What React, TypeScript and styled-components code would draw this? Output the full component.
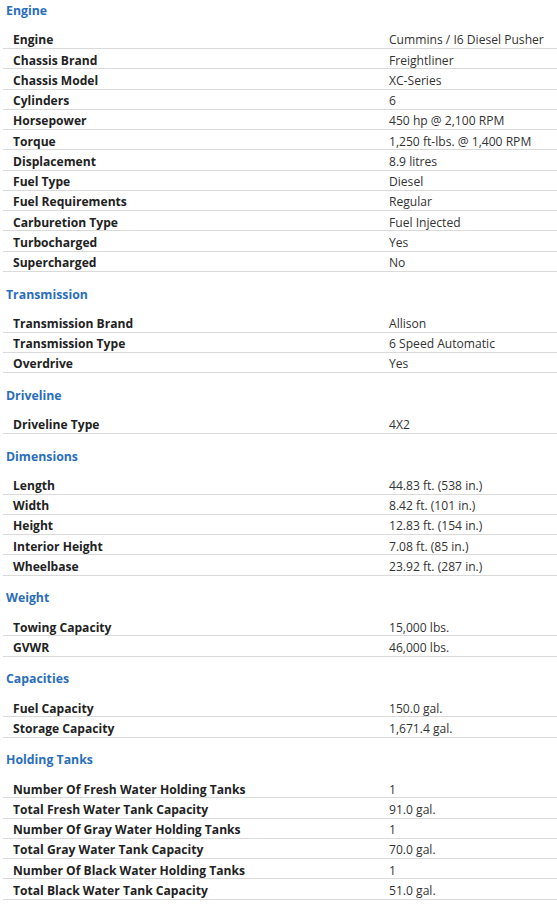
import styled, { createGlobalStyle } from 'styled-components'

const GlobalStyle = createGlobalStyle`
  html, body {
    margin: 0;
    padding: 0;
    background: #ffffff;
  }
  body {
    font-family: 'Open Sans', 'Noto Sans', Arial, sans-serif;
    color: #333333;
    -webkit-font-smoothing: antialiased;
  }
`

const Page = styled.div`
  width: 557px;
  padding: 0 0 0 3px;
  box-sizing: border-box;
`

const Section = styled.section`
  & + & {
    margin-top: 11.75px;
  }
`

const Heading = styled.h3`
  margin: 0;
  padding: 2px 0 0 3px;
  height: 26.75px;
  font-size: 12.3px;
  font-weight: 700;
  line-height: 18px;
  color: #2a6ebb;
`

const Row = styled.div`
  display: grid;
  grid-template-columns: 386px 1fr;
  height: 19.25px;
  border-bottom: 1px solid #dadada;
  font-size: 12.1px;
  line-height: 17px;
  white-space: nowrap;
`

const Label = styled.div`
  padding: 2.5px 0 0 10px;
  font-weight: 700;
  color: #222222;
`

const Value = styled.div`
  padding-top: 2.5px;
  color: #333333;
`

type Spec = [string, string]

const sections: { title: string; rows: Spec[] }[] = [
  {
    title: 'Engine',
    rows: [
      ['Engine', 'Cummins / I6 Diesel Pusher'],
      ['Chassis Brand', 'Freightliner'],
      ['Chassis Model', 'XC-Series'],
      ['Cylinders', '6'],
      ['Horsepower', '450 hp @ 2,100 RPM'],
      ['Torque', '1,250 ft-lbs. @ 1,400 RPM'],
      ['Displacement', '8.9 litres'],
      ['Fuel Type', 'Diesel'],
      ['Fuel Requirements', 'Regular'],
      ['Carburetion Type', 'Fuel Injected'],
      ['Turbocharged', 'Yes'],
      ['Supercharged', 'No'],
    ],
  },
  {
    title: 'Transmission',
    rows: [
      ['Transmission Brand', 'Allison'],
      ['Transmission Type', '6 Speed Automatic'],
      ['Overdrive', 'Yes'],
    ],
  },
  {
    title: 'Driveline',
    rows: [['Driveline Type', '4X2']],
  },
  {
    title: 'Dimensions',
    rows: [
      ['Length', '44.83 ft. (538 in.)'],
      ['Width', '8.42 ft. (101 in.)'],
      ['Height', '12.83 ft. (154 in.)'],
      ['Interior Height', '7.08 ft. (85 in.)'],
      ['Wheelbase', '23.92 ft. (287 in.)'],
    ],
  },
  {
    title: 'Weight',
    rows: [
      ['Towing Capacity', '15,000 lbs.'],
      ['GVWR', '46,000 lbs.'],
    ],
  },
  {
    title: 'Capacities',
    rows: [
      ['Fuel Capacity', '150.0 gal.'],
      ['Storage Capacity', '1,671.4 gal.'],
    ],
  },
  {
    title: 'Holding Tanks',
    rows: [
      ['Number Of Fresh Water Holding Tanks', '1'],
      ['Total Fresh Water Tank Capacity', '91.0 gal.'],
      ['Number Of Gray Water Holding Tanks', '1'],
      ['Total Gray Water Tank Capacity', '70.0 gal.'],
      ['Number Of Black Water Holding Tanks', '1'],
      ['Total Black Water Tank Capacity', '51.0 gal.'],
    ],
  },
]

export default function App() {
  return (
    <>
      <GlobalStyle />
      <Page>
        {sections.map((s) => (
          <Section key={s.title}>
            <Heading>{s.title}</Heading>
            {s.rows.map(([label, value]) => (
              <Row key={label}>
                <Label>{label}</Label>
                <Value>{value}</Value>
              </Row>
            ))}
          </Section>
        ))}
      </Page>
    </>
  )
}
